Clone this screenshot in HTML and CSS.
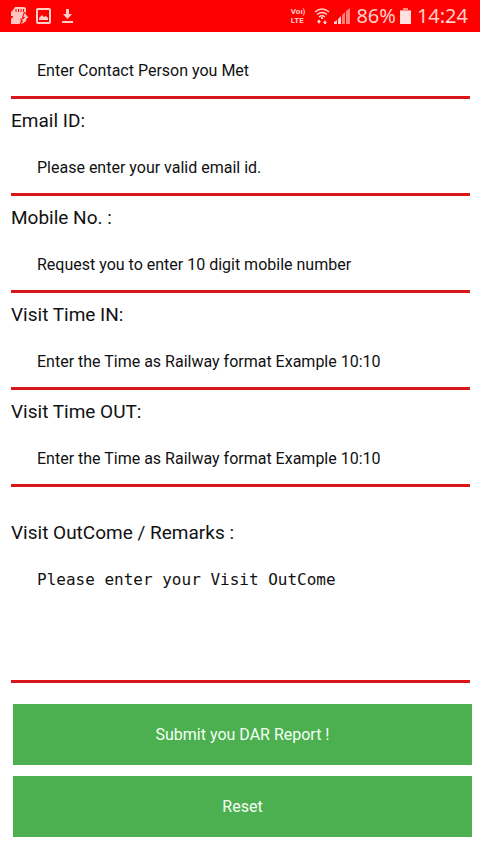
FILE: index.html
```html
<!DOCTYPE html>
<html lang="en">
<head>
<meta charset="utf-8">
<meta name="viewport" content="width=device-width, initial-scale=1">
<title>DAR Report</title>
<link rel="stylesheet" href="styles.css">
</head>
<body>
<header class="status">
  <div class="status-group status-left">
    <svg class="icon" width="20" height="18" viewBox="0 0 20 18" aria-hidden="true">
      <path fill="#ffc4c0" d="M5 0h9l2 1v6l-5 6-1 4H1v-5l2-2V9H1V5l2-2z"/>
      <path stroke="#f00" stroke-width="1" d="M6 2v3M8.500 2v3M11 2v3M13.500 2v3"/>
      <path fill="#ffc4c0" stroke="#f00" stroke-width="1" d="M14.500 5l5 6.500h-2.500q0 5-7.500 6l3-3.500-2-2h2l2-1.500h-2z"/>
    </svg>
    <svg class="icon" width="15" height="16" viewBox="0 0 15 16" aria-hidden="true">
      <rect x="1" y="1" width="13" height="14" rx="1" fill="none" stroke="#ffd0cc" stroke-width="2"/>
      <path fill="#ffd0cc" d="M3 12V10l3-3 2 2 2-1 2 2v2z"/>
    </svg>
    <svg class="icon" width="13" height="16" viewBox="0 0 13 16" aria-hidden="true">
      <path fill="#ffd0cc" d="M5 1h3v5h3l-4.500 5L2 6h3zM1 13h11v2H1z"/>
    </svg>
  </div>
  <div class="status-group status-right">
    <span class="volte"><span>Voı)</span><span>LTE</span></span>
    <svg class="icon wifi" width="16" height="18" viewBox="0 0 16 18" aria-hidden="true">
      <g fill="none" stroke="#ffd0cc" stroke-width="1.500">
        <path d="M1 5q7-6 14 0M3 7.500q5-4 10 0M5 10q3-2.500 6 0"/>
      </g>
      <path fill="#ffd0cc" d="M7 10h2v2H7zM3 14h1v-1h2v1h1l-2 3zM9 16l2-3 2 3h-1v1h-2v-1z"/>
    </svg>
    <svg class="icon signal" width="16" height="16" viewBox="0 0 16 16" aria-hidden="true">
      <path fill="#ffd0cc" d="M0 16v-2l3-2v4zM4 16v-5l3-3v8z"/>
      <path fill="#ff7f7a" d="M8 16V7l3-3v12zM12 16V3l4-3v16z"/>
    </svg>
    <span class="reading">86%</span>
    <svg class="icon battery" width="11" height="16" viewBox="0 0 11 16" aria-hidden="true">
      <path fill="#ff8a84" d="M3 0h5v2h3v2H0V2h3z"/>
      <path fill="#ffe2df" d="M0 3h11v13H0z"/>
    </svg>
    <time class="reading clock">14:24</time>
  </div>
</header>
<main>
  <form class="report">
    <div class="field">
      <input type="text" aria-label="Contact person" placeholder="Enter Contact Person you Met">
    </div>
    <div class="field">
      <label for="email">Email ID:</label>
      <input id="email" type="email" placeholder="Please enter your valid email id.">
    </div>
    <div class="field">
      <label for="mobile">Mobile No. :</label>
      <input id="mobile" type="tel" placeholder="Request you to enter 10 digit mobile number">
    </div>
    <div class="field">
      <label for="time-in">Visit Time IN:</label>
      <input id="time-in" type="text" placeholder="Enter the Time as Railway format Example 10:10">
    </div>
    <div class="field">
      <label for="time-out">Visit Time OUT:</label>
      <input id="time-out" type="text" placeholder="Enter the Time as Railway format Example 10:10">
    </div>
    <div class="field remarks">
      <label for="outcome">Visit OutCome / Remarks :</label>
      <textarea id="outcome" placeholder="Please enter your Visit OutCome"></textarea>
    </div>
    <div class="actions">
      <button type="submit">Submit you DAR Report !</button>
      <button type="reset">Reset</button>
    </div>
  </form>
</main>
</body>
</html>
```
FILE: styles.css
```css
* {
  box-sizing: border-box;
}

body {
  margin: 0;
  background: #fff;
  color: #111;
  font-family: Roboto, "Liberation Sans", sans-serif;
}

.status {
  display: flex;
  justify-content: space-between;
  align-items: center;
  height: 32px;
  padding: 0 12px 0 10px;
  background: #f00;
  color: #ffd0cc;
}

.status-group {
  display: flex;
  align-items: center;
}

.status-left {
  gap: 6px;
}

.status-left .icon:last-child {
  margin-left: 4px;
}

.status-right {
  gap: 4px;
}

.icon {
  display: block;
  flex: none;
}

.volte {
  display: flex;
  flex-direction: column;
  margin-right: 5px;
  font: 700 8px/9px Roboto, "Liberation Sans", sans-serif;
}

.reading {
  margin-left: 2px;
  font: 400 20px/32px "Noto Sans", sans-serif;
}

.report {
  padding: 13px 8px 16px 11px;
}

.field {
  display: flex;
  flex-direction: column;
  margin-right: 2px;
}

label {
  height: 43px;
  font-size: 19px;
  line-height: 43px;
}

input,
textarea {
  width: 100%;
  margin: 0;
  border: 0;
  border-bottom: 3px solid #d8161b;
  border-radius: 0;
  outline: 0;
  background: transparent;
  color: #111;
  font: 400 16px/20px Roboto, "Liberation Sans", sans-serif;
}

input {
  height: 54px;
  padding: 0 26px;
}

textarea {
  display: block;
  height: 129px;
  padding: 16px 26px;
  resize: none;
  font-family: "DejaVu Sans Mono", monospace;
}

::placeholder {
  color: #111;
  opacity: 1;
}

.remarks {
  margin-top: 24px;
}

.actions {
  display: flex;
  flex-direction: column;
  gap: 11px;
  margin: 21px 0 0 2px;
}

button {
  height: 61px;
  border: 0;
  background: #4caf50;
  color: #f4fff4;
  font: 400 16px/20px Roboto, "Liberation Sans", sans-serif;
}
```
